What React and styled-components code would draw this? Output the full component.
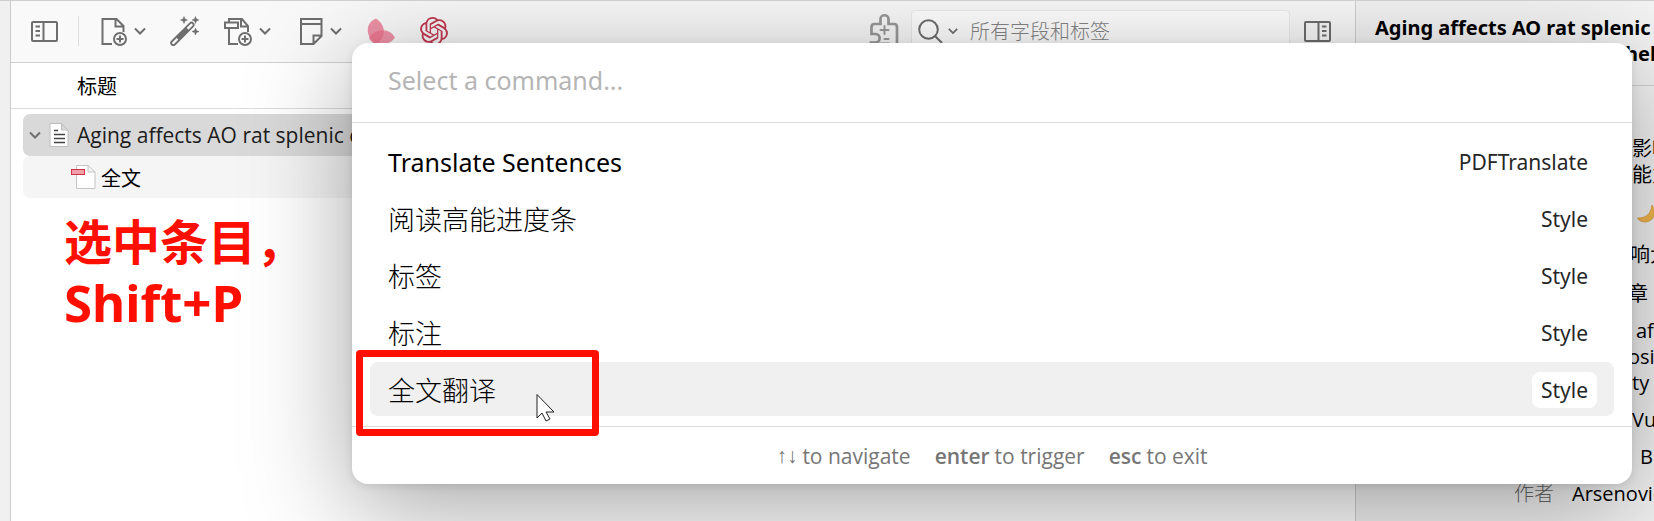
import React from "react";
import styled, { createGlobalStyle } from "styled-components";
import { SiOpenai } from "react-icons/si";

const Global = createGlobalStyle`
  *, *::before, *::after { box-sizing: border-box; }
  body {
    margin: 0;
    overflow: hidden;
    background: #f0f0f0;
    color: #000;
    font-family: "Noto Sans", "Noto Sans CJK SC", sans-serif;
    font-size: 20px;
  }
  button, input { font: inherit; color: inherit; }
`;

const Window = styled.div`
  position: relative;
  display: flex;
  min-height: 100vh;
  border-top: 1px solid #cfcfcf;
  overflow: hidden;
`;

const Rail = styled.div`
  flex: none;
  width: 11px;
  background: #f0f0f0;
  border-right: 1px solid #cccccc;
`;

const Library = styled.main`
  flex: 1;
  min-width: 0;
  background: #fff;
`;

const Toolbar = styled.header`
  display: flex;
  align-items: center;
  height: 62px;
  padding: 0 23px 2px 19px;
  background: #f9f9f9;
  border-bottom: 1px solid #d0d0d0;
  color: #6e6e6e;
`;

const Tools = styled.div`
  display: flex;
  align-items: center;
  gap: 24px;
`;

const IconButton = styled.button`
  display: flex;
  align-items: center;
  gap: 5px;
  padding: 0;
  border: 0;
  background: none;
  svg { display: block; }
`;

const Separator = styled.span`
  width: 1px;
  height: 30px;
  margin: 0 20px 0 18px;
  background: #dedede;
`;

const SearchArea = styled.div`
  display: flex;
  align-items: center;
  gap: 12px;
  margin-left: auto;
`;

const SearchBox = styled.label`
  display: flex;
  align-items: center;
  gap: 4px;
  width: 379px;
  height: 42px;
  padding: 0 6px;
  border: 1px solid #ececec;
  border-radius: 4px;
  background: #fff;
  svg { flex: none; }
`;

const SearchInput = styled.input`
  flex: 1;
  min-width: 0;
  margin-left: 8px;
  padding: 2px 0 0;
  border: 0;
  outline: 0;
  background: none;
  &::placeholder { color: #858585; font-weight: 300; opacity: 1; }
`;

const ColumnHeader = styled.div`
  height: 46px;
  padding-left: 66px;
  border-bottom: 1px solid #dcdcdc;
  line-height: 47px;
`;

const Tree = styled.ul`
  margin: 0;
  padding: 5px 12px 0;
  list-style: none;
`;

const TreeRow = styled.li`
  display: flex;
  align-items: center;
  gap: ${(p) => (p.$child ? 5 : 8)}px;
  height: 42px;
  padding-left: ${(p) => (p.$child ? 48 : 6)}px;
  border-radius: 7px;
  background: ${(p) => (p.$selected ? "#d9d9d9" : "#f5f5f5")};
  color: ${(p) => (p.$selected ? "#1c1c1c" : "#000")};
  font-family: "Open Sans", "Noto Sans CJK SC", sans-serif;
  font-size: ${(p) => (p.$child ? 20 : 21)}px;
  white-space: nowrap;
  svg { flex: none; }
`;

const Twisty = styled.button`
  display: flex;
  padding: 0;
  border: 0;
  background: none;
  color: #6e6e6e;
`;

const Annotation = styled.p`
  margin: 14px 0 0 53px;
  color: #ff0f00;
  font-size: 48px;
  font-weight: 700;
  line-height: 60px;
`;

const Shortcut = styled.span`
  display: block;
  font-size: 51px;
`;

const Details = styled.aside`
  flex: none;
  width: 299px;
  border-left: 1px solid #d0d0d0;
  background: #f4f4f4;
  overflow: hidden;
  white-space: nowrap;
  line-height: 26px;
`;

const DetailsTitle = styled.h1`
  height: 85px;
  margin: 0;
  padding: 14px 0 0 19px;
  border-bottom: 1px solid #d5d5d5;
  font-size: 20px;
  font-weight: 700;
  line-height: 26px;
`;

const TitleTail = styled.span`
  display: block;
  padding-left: 250px;
`;

const Fields = styled.dl`
  display: grid;
  grid-template-columns: 198px 1fr;
  column-gap: 18px;
  row-gap: ${(p) => p.$gap}px;
  margin: 0;
  padding-top: ${(p) => p.$top}px;
`;

const FieldName = styled.dt`
  color: #6a6a6a;
  font-weight: 300;
  text-align: right;
`;

const FieldValue = styled.dd`
  margin: 0;
  min-height: 26px;
  padding-left: ${(p) => p.$indent || 0}px;
  font-family: "Open Sans", "Noto Sans CJK SC", sans-serif;
`;

const MoonValue = styled(FieldValue)`
  display: flex;
  align-items: center;
  height: 30px;
`;

const FirstLine = styled.span`
  display: block;
  padding-left: 8px;
`;

const Overlay = styled.div`
  position: absolute;
  inset: 0;
  padding: 42px 22px 0 352px;
`;

const Palette = styled.section`
  border-radius: 16px;
  background: #fff;
  box-shadow: 0 24px 105px rgba(0, 0, 0, 0.36), 0 2px 8px rgba(0, 0, 0, 0.1);
`;

const PaletteInput = styled.input`
  display: block;
  width: 100%;
  height: 80px;
  padding: 0 36px 6px;
  border: 0;
  border-bottom: 1px solid #dedede;
  border-radius: 16px 16px 0 0;
  outline: 0;
  background: none;
  font-size: 25px;
  &::placeholder { color: #b5b5b5; opacity: 1; }
`;

const Commands = styled.ul`
  display: flex;
  flex-direction: column;
  gap: 3px;
  margin: 0;
  padding: 11px 18px 10px;
  list-style: none;
  border-bottom: 1px solid #dedede;
`;

const CommandItem = styled.li`
  position: relative;
`;

const CommandButton = styled.button`
  display: flex;
  align-items: center;
  justify-content: space-between;
  width: 100%;
  height: 54px;
  padding: 1px 17px 0 18px;
  border: 0;
  border-radius: 8px;
  background: ${(p) => (p.$active ? "#f0f0f0" : "none")};
  font-size: ${(p) => (p.$cjk ? 27 : 25)}px;
  font-weight: ${(p) => (p.$cjk ? 300 : 400)};
`;

const Tag = styled.span`
  padding: 0 9px;
  border-radius: 8px;
  background: #fff;
  color: #262626;
  font-size: 21px;
  font-weight: 400;
  line-height: 36px;
`;

const Highlight = styled.span`
  position: absolute;
  inset: -12px auto -20px -14px;
  width: 243px;
  border: 7px solid #ff0f00;
  border-radius: 4px;
  pointer-events: none;
`;

const Pointer = styled.svg`
  position: absolute;
  left: 166px;
  top: 31px;
`;

const Hints = styled.footer`
  display: flex;
  justify-content: center;
  gap: 24px;
  padding: 14px 0 13px;
  color: #767676;
  font-family: "Open Sans", sans-serif;
  font-size: 21px;
  line-height: 30px;
`;

const Hint = styled.span`
  display: flex;
  gap: 5px;
`;

const Key = styled.kbd`
  font-family: inherit;
  font-weight: 600;
`;

const ArrowKeys = styled.kbd`
  font-family: "Liberation Sans", sans-serif;
`;

const line = { fill: "none", stroke: "currentColor", strokeWidth: 2 };

const Chevron = ({ size = 12 }) => (
  <svg width={size} height={size} viewBox="0 0 12 12" {...line}>
    <path d="M1 3.500l5 5 5-5" />
  </svg>
);

const PaneIcon = ({ right }) => (
  <svg width="30" height="30" viewBox="0 0 30 30" {...line} transform={right ? "scale(-1 1)" : undefined}>
    <rect x="2" y="6" width="25" height="19" rx="1" />
    <path d="M13.500 6v19M5.500 10.500h4.500M5.500 15h4.500M5.500 19.500h4.500" />
  </svg>
);

const PlusBadge = () => (
  <g>
    <circle cx="21" cy="23" r="6" />
    <path d="M21 19.500v7M17.500 23h7" />
  </g>
);

const NewItemIcon = () => (
  <svg width="30" height="30" viewBox="0 0 30 30" {...line}>
    <path d="M13 28H3.500v-25h14l7 7v6M16.500 3v7.500h8" />
    <PlusBadge />
  </svg>
);

const AttachIcon = () => (
  <svg width="30" height="30" viewBox="0 0 30 30" {...line}>
    <path d="M14 28H5V12M5 6.500V3h13l6 7v6M17 3v7.500h7" />
    <rect x="1" y="6.500" width="13" height="5.500" />
    <PlusBadge />
  </svg>
);

const WandIcon = () => (
  <svg width="30" height="30" viewBox="0 0 30 30">
    <path d="M1.800 25.500L20 7.300a2 2 0 0 1 3 3L4.800 28.500a2.100 2.100 0 0 1-3-3z" fill="none" stroke="currentColor" strokeWidth="1.800" />
    <path d="M6 21.300l10-10 3 3-10 10z" fill="currentColor" />
    <path d="M14 .5l1 2.500 2.500 1-2.500 1-1 2.500-1-2.500-2.500-1 2.500-1zM25.500.5l1 2.500 2.500 1-2.500 1-1 2.500-1-2.500-2.500-1 2.500-1zM25.500 12l1 2.500 2.500 1-2.500 1-1 2.500-1-2.500-2.500-1 2.500-1z" fill="currentColor" stroke="currentColor" strokeWidth=".5" />
  </svg>
);

const NoteIcon = () => (
  <svg width="30" height="30" viewBox="0 0 30 30" {...line}>
    <path d="M6 3h20.500V20L18.500 28H6zM6 8h20.500M18.500 28v-8.500h8" />
  </svg>
);

const PetalsIcon = () => (
  <svg width="30" height="30" viewBox="0 0 30 30">
    <path d="M10 2.500C15 6 19 11 17.500 18c-1 5-4 8-7.500 10C4 24 0 17 2.500 9.500 4 6 6.500 4 10 2.500z" fill="#e96f8b" opacity=".75" />
    <path d="M29 21.500c-3-5-8-8-14-7-6 .5-10 3.500-12 7.500 3 6 9 8 15 6.500 5-1 8.500-3.500 11-7z" fill="#e96f8b" opacity=".75" />
  </svg>
);

const PluginIcon = () => (
  <svg width="30" height="36" viewBox="0 0 30 36" fill="none" stroke="#9a9a9a" strokeWidth="2.700" strokeLinecap="round">
    <path d="M2 34v-4.500h4.500c5.500 0 5.500-8.500 0-8.500H2.500v-7c0-2 1-3 3-3H11.500V6c0-5 8-5 8 0v5H25c2 0 3 1 3 3v21" />
    <path d="M15.500 13v8M11.500 17h8M15.500 26h4M11 30.500h9" strokeWidth="2" />
  </svg>
);

const SearchIcon = () => (
  <svg width="26" height="26" viewBox="0 0 26 26" {...line}>
    <circle cx="10.500" cy="11.500" r="9.300" />
    <path d="M17 18l7 7" />
  </svg>
);

const ArticleIcon = () => (
  <svg width="20" height="24" viewBox="0 0 20 24" fill="#fff" stroke="#bdbdbd">
    <path d="M1 .5h11.500l6.500 6.500v16.500H1zM12.500.5V7H19" />
    <path d="M5 7.500h4M5 11.500h11M5 15.500h11M5 19.500h11" stroke="#444" strokeWidth="1.500" />
  </svg>
);

const PdfIcon = () => (
  <svg width="25" height="24" viewBox="0 0 25 24" fill="#fff" stroke="#c4c4c4">
    <path d="M5.500.5H17l7 6.500v16.500H5.500zM17 .5V7h7" />
    <rect x=".5" y="4.500" width="13" height="5" fill="#f0a0a8" stroke="#cf3347" />
  </svg>
);

const MoonIcon = () => (
  <svg width="24" height="24" viewBox="0 0 24 24" role="img" aria-label="moon">
    <path d="M16 2c5 8 2 16-6 17-4 0-7-1-8.500-4 8 .5 13.500-4 14.500-13z" fill="#f5b94d" stroke="#dd9838" strokeWidth=".7" />
  </svg>
);

const commands = [
  { name: "Translate Sentences", tag: "PDFTranslate" },
  { name: "阅读高能进度条", tag: "Style", cjk: true },
  { name: "标签", tag: "Style", cjk: true },
  { name: "标注", tag: "Style", cjk: true },
  { name: "全文翻译", tag: "Style", cjk: true, active: true },
];

export default function App() {
  return (
    <Window>
      <Global />
      <Rail />
      <Library>
        <Toolbar>
          <IconButton aria-label="Toggle collections"><PaneIcon /></IconButton>
          <Separator />
          <Tools>
            <IconButton aria-label="New item"><NewItemIcon /><Chevron /></IconButton>
            <IconButton aria-label="Add by identifier"><WandIcon /></IconButton>
            <IconButton aria-label="Add attachment"><AttachIcon /><Chevron /></IconButton>
            <IconButton aria-label="New note"><NoteIcon /><Chevron /></IconButton>
            <IconButton aria-label="Style"><PetalsIcon /></IconButton>
            <IconButton aria-label="GPT"><SiOpenai size={28} color="#c43a52" /></IconButton>
          </Tools>
          <SearchArea>
            <IconButton aria-label="Plugins"><PluginIcon /></IconButton>
            <SearchBox>
              <SearchIcon />
              <Chevron size={10} />
              <SearchInput aria-label="Search" placeholder="所有字段和标签" />
            </SearchBox>
            <IconButton aria-label="Toggle details"><PaneIcon right /></IconButton>
          </SearchArea>
        </Toolbar>
        <ColumnHeader>标题</ColumnHeader>
        <Tree>
          <TreeRow $selected>
            <Twisty aria-label="Collapse"><Chevron /></Twisty>
            <ArticleIcon />
            Aging affects AO rat splenic c
          </TreeRow>
          <TreeRow $child>
            <PdfIcon />
            全文
          </TreeRow>
        </Tree>
        <Annotation>
          选中条目，
          <Shortcut>Shift+P</Shortcut>
        </Annotation>
      </Library>
      <Details>
        <DetailsTitle>
          Aging affects AO rat splenic
          <TitleTail>hel</TitleTail>
        </DetailsTitle>
        <Fields $gap={12} $top={50}>
          <FieldName />
          <FieldValue $indent={60}>影响<br />能力</FieldValue>
          <FieldName />
          <MoonValue $indent={64}><MoonIcon /></MoonValue>
          <FieldName />
          <FieldValue $indent={58}>响大</FieldValue>
        </Fields>
        <Fields $gap={11} $top={13}>
          <FieldName />
          <FieldValue $indent={56}>章</FieldValue>
          <FieldName />
          <FieldValue $indent={56}>
            <FirstLine>affects</FirstLine>
            osition<br />&#8202;&#8202;ty
          </FieldValue>
          <FieldName />
          <FieldValue $indent={60}>Vukanić</FieldValue>
          <FieldName />
          <FieldValue $indent={68}>Biljana</FieldValue>
          <FieldName>作者</FieldName>
          <FieldValue>Arsenović</FieldValue>
        </Fields>
      </Details>
      <Overlay>
        <Palette aria-label="Command palette">
          <PaletteInput aria-label="Command" placeholder="Select a command..." />
          <Commands>
            {commands.map((c) => (
              <CommandItem key={c.name}>
                <CommandButton $active={c.active} $cjk={c.cjk}>
                  {c.name}
                  <Tag>{c.tag}</Tag>
                </CommandButton>
                {c.active && (
                  <>
                    <Highlight />
                    <Pointer width="20" height="30" viewBox="0 0 20 30" fill="#fff" stroke="#222">
                      <path d="M1 1.500v23.500l5-5 4 8 4-2-4-7h8z" />
                    </Pointer>
                  </>
                )}
              </CommandItem>
            ))}
          </Commands>
          <Hints>
            <Hint><ArrowKeys>↑↓</ArrowKeys>to navigate</Hint>
            <Hint><Key>enter</Key>to trigger</Hint>
            <Hint><Key>esc</Key>to exit</Hint>
          </Hints>
        </Palette>
      </Overlay>
    </Window>
  );
}
